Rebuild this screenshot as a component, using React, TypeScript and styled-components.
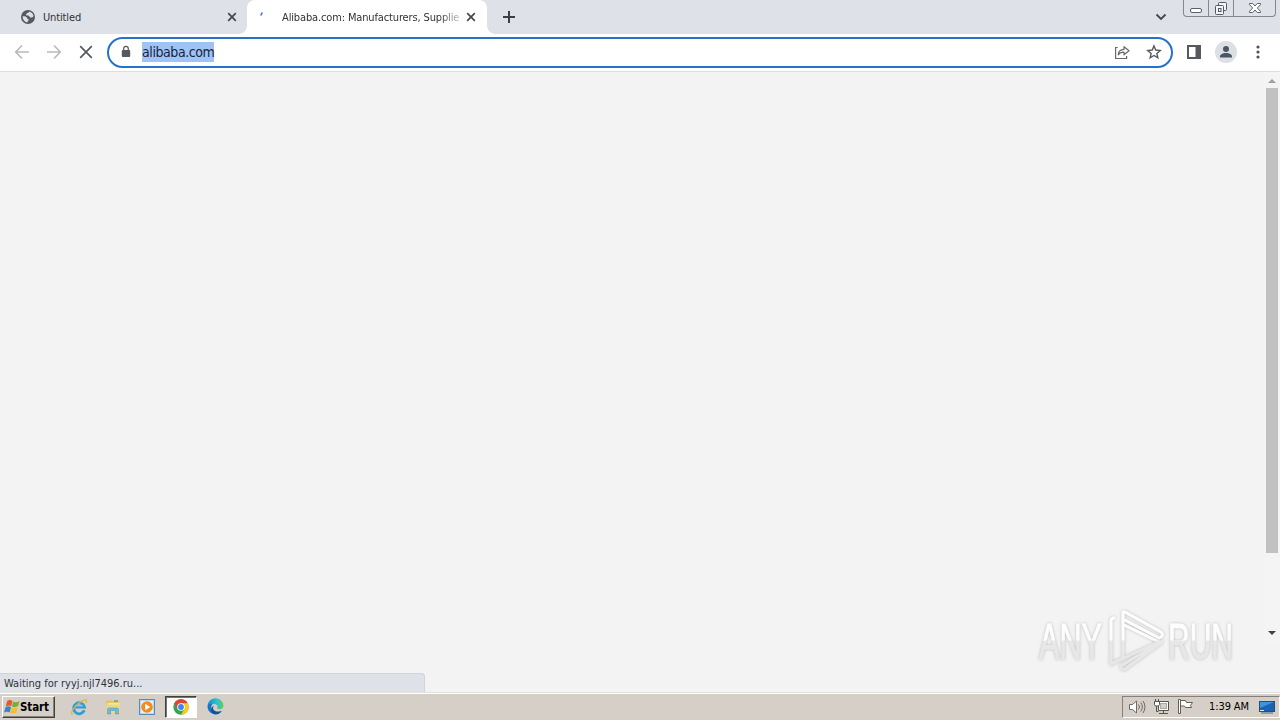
import React from "react";
import styled, { createGlobalStyle } from "styled-components";

const GlobalStyle = createGlobalStyle`
  * {
    box-sizing: border-box;
  }
  body {
    margin: 0;
    overflow: hidden;
    font-family: "DejaVu Sans Condensed", "DejaVu Sans", Tahoma, sans-serif;
    font-stretch: condensed;
  }
  svg {
    display: block;
    flex: none;
  }
`;

const Screen = styled.div`
  position: relative;
  display: flex;
  flex-direction: column;
  width: 1280px;
  height: 720px;
  background: #f3f3f3;
  color: #303236;
`;

const TabStrip = styled.div`
  display: flex;
  height: 34px;
  flex: none;
  background: #dee1e8;
`;

const Tab = styled.div<{ $active?: boolean }>`
  position: relative;
  display: flex;
  align-items: center;
  width: ${({ $active }) => ($active ? "240px" : "247px")};
  padding: ${({ $active }) => ($active ? "0 9px 0 13px" : "0 8px 0 20px")};
  background: ${({ $active }) => ($active ? "#fff" : "transparent")};
  border-radius: 8px 8px 0 0;
  &::before,
  &::after {
    content: "";
    display: ${({ $active }) => ($active ? "block" : "none")};
    position: absolute;
    bottom: 0;
    width: 8px;
    height: 8px;
  }
  &::before {
    left: -8px;
    background: radial-gradient(circle at 0 0, transparent 7.5px, #fff 8px);
  }
  &::after {
    right: -8px;
    background: radial-gradient(circle at 100% 0, transparent 7.5px, #fff 8px);
  }
`;

const TabTitle = styled.span<{ $gap: number; $fade?: boolean }>`
  flex: 1;
  min-width: 0;
  margin: 0 4px 0 ${({ $gap }) => $gap}px;
  padding-top: 1px;
  white-space: nowrap;
  font-size: 11px;
  line-height: 16px;
  letter-spacing: -0.14px;
  mask-image: ${({ $fade }) =>
    $fade ? "linear-gradient(90deg, #000 88%, rgba(0, 0, 0, 0.25))" : "none"};
`;

const NewTab = styled.div`
  display: flex;
  align-items: center;
  margin-left: 15px;
`;

const StripEnd = styled.div`
  display: flex;
  margin-left: auto;
  padding-right: 4px;
`;

const TabSearch = styled.div`
  display: flex;
  align-items: center;
  margin-right: 16px;
`;

const WindowControls = styled.div`
  display: flex;
  height: 17px;
  border: 1px solid #84878e;
  border-top: none;
  border-radius: 0 0 4px 4px;
`;

const WindowButton = styled.div<{ $width: number }>`
  display: flex;
  justify-content: center;
  width: ${({ $width }) => $width}px;
  & + & {
    border-left: 1px solid #84878e;
  }
`;

const Toolbar = styled.div`
  display: flex;
  align-items: center;
  height: 38px;
  flex: none;
  padding: 0 14px 1px 12px;
  background: #fff;
  border-bottom: 1px solid #dcdddf;
`;

const NavButtons = styled.div`
  display: flex;
  gap: 12px;
  margin-right: 11px;
`;

const AddressBar = styled.div`
  display: flex;
  align-items: center;
  flex: 1;
  height: 31px;
  padding: 0 9px 0 10px;
  border: 2px solid #2672c9;
  border-radius: 16px;
  background: #fff;
`;

const Address = styled.span`
  margin: 0 auto 0 9px;
  padding-top: 1px;
  background: #a0c3f6;
  color: #17233c;
  font-size: 14px;
  line-height: 19px;
  letter-spacing: -0.42px;
`;

const AddressActions = styled.div`
  display: flex;
  align-items: center;
  gap: 16px;
`;

const ToolbarActions = styled.div`
  display: flex;
  align-items: center;
  gap: 13px;
  margin-left: 13px;
`;

const Avatar = styled.div`
  display: flex;
  align-items: center;
  justify-content: center;
  width: 22px;
  height: 22px;
  border-radius: 50%;
  background: #dcdfe4;
`;

const Page = styled.div`
  display: flex;
  flex: 1;
  min-height: 0;
`;

const PageBody = styled.div`
  display: flex;
  align-items: flex-end;
  flex: 1;
`;

const StatusBubble = styled.div`
  width: 425px;
  height: 19px;
  padding-left: 4px;
  background: #dee1e8;
  border: 1px solid #d2d4d9;
  border-left: none;
  border-bottom: none;
  border-radius: 0 4px 0 0;
  font-size: 11px;
  line-height: 19px;
  white-space: nowrap;
`;

const Scrollbar = styled.div`
  display: flex;
  flex-direction: column;
  align-items: center;
  width: 16px;
  height: 570px;
  background: #f4f4f4;
`;

const Thumb = styled.div`
  width: 12px;
  height: 465px;
  background: #c1c1c1;
`;

const Arrow = styled.div<{ $down?: boolean }>`
  width: 8px;
  height: 4px;
  margin: ${({ $down }) => ($down ? "auto 0 7px 0" : "7px 0 5px 0")};
  background: ${({ $down }) => ($down ? "#404040" : "#a0a0a0")};
  clip-path: ${({ $down }) =>
    $down ? "polygon(0 0, 100% 0, 50% 100%)" : "polygon(50% 0, 100% 100%, 0 100%)"};
`;

const Watermark = styled.div`
  position: absolute;
  left: 1030px;
  top: 600px;
`;

const Taskbar = styled.div`
  display: flex;
  align-items: center;
  height: 28px;
  flex: none;
  padding: 0 0 0 2px;
  background: #d5cfc7;
  border-top: 1px solid #e4e2df;
  box-shadow: inset 0 1px 0 #fff;
`;

const StartButton = styled.div`
  display: flex;
  align-items: center;
  width: 53px;
  height: 22px;
  padding-left: 1px;
  border: 1px solid;
  border-color: #fff #404040 #404040 #fff;
  box-shadow: inset -1px -1px 0 #858078;
  color: #000;
  font-size: 11.5px;
  font-weight: 700;
  letter-spacing: -0.1px;
`;

const QuickLaunch = styled.div`
  display: flex;
  align-items: center;
  margin-left: 7px;
`;

const TaskItem = styled.div<{ $active?: boolean }>`
  display: flex;
  align-items: center;
  justify-content: center;
  width: ${({ $active }) => ($active ? "32px" : "34px")};
  height: 22px;
  margin: ${({ $active }) => ($active ? "0 1px" : "0")};
  background: ${({ $active }) => ($active ? "#fff" : "transparent")};
  border: ${({ $active }) => ($active ? "1px solid" : "none")};
  border-color: #404040 #fff #fff #404040;
  box-shadow: ${({ $active }) => ($active ? "inset 1px 1px 0 #77736e" : "none")};
`;

const Tray = styled.div`
  display: flex;
  align-items: center;
  width: 158px;
  height: 22px;
  margin-left: auto;
  padding-left: 5px;
  border: 1px solid;
  border-color: #85817a #fff #fff #85817a;
  gap: 7px;
`;

const Clock = styled.span`
  width: 42px;
  margin: 0 1px 0 8px;
  color: #000;
  font-size: 11px;
  letter-spacing: -0.1px;
  white-space: nowrap;
`;

const GlobeIcon = () => (
  <svg width="16" height="16" viewBox="0 0 16 16">
    <circle cx="8" cy="8" r="7" fill="#56595e" />
    <path
      d="M2.7 7.2c2 0 4.2.3 4.4 1.8.2 1.2 1.5.8 1.6 1.8.1 1-1.3 1.1-1.4 2.8A5.7 5.7 0 0 1 2.7 7.2ZM9.2 2.4c-.2 1-.3 1.3-1.6 1.4-1 .1-.5 1.2-1.6 1.5-.3.9.8 1.1 1.9 1.1 1.7 0 1.3 1.6 2.4 2 1.2.4 2.2.1 3.2-1.1A5.7 5.7 0 0 0 9.2 2.4Z"
      fill="#dee1e8"
    />
  </svg>
);

const CloseIcon = () => (
  <svg width="14" height="14" viewBox="0 0 14 14" stroke="#45484c" strokeWidth="1.7">
    <path d="M3.200 3.200l7.600 7.600M10.800 3.200l-7.600 7.600" />
  </svg>
);

const BackIcon = () => (
  <svg width="20" height="20" viewBox="0 0 20 20" fill="none" stroke="#b9babc" strokeWidth="1.6">
    <path d="M17 10H4M10 3.5L3.7 10l6.3 6.5" />
  </svg>
);

const ForwardIcon = () => (
  <svg width="20" height="20" viewBox="0 0 20 20" fill="none" stroke="#b9babc" strokeWidth="1.6">
    <path d="M3 10h13M10 3.5l6.3 6.5-6.3 6.5" />
  </svg>
);

const StopIcon = () => (
  <svg width="20" height="20" viewBox="0 0 20 20" stroke="#56595d" strokeWidth="1.7">
    <path d="M4.2 4.2l11.6 11.6M15.8 4.2L4.2 15.8" />
  </svg>
);

const LockIcon = () => (
  <svg width="14" height="14" viewBox="0 0 14 14">
    <rect x="2.8" y="5" width="8.400" height="7" rx="1" fill="#55585c" />
    <path d="M4.7 5.5V3.7a2.3 2.3 0 0 1 4.6 0v1.8" fill="none" stroke="#55585c" strokeWidth="1.2" />
  </svg>
);

const ShareIcon = () => (
  <svg width="16" height="16" viewBox="0 0 16 16" fill="none" stroke="#66696d" strokeWidth="1.2">
    <path d="M3.700 3.500H1.600v11h11V12" />
    <path
      d="M4.200 10.800c.2-3.500 2-5.200 5.800-5.400V2.700l5 4.100-5 4V8.200c-2.700 0-4.300.5-5.800 2.600Z"
      strokeLinejoin="round"
    />
  </svg>
);

const StarIcon = () => (
  <svg width="16" height="16" viewBox="0 0 16 16" fill="none" stroke="#56595d" strokeWidth="1.4">
    <path d="M8 1.900l1.750 4.150 4.500.4-3.400 2.950 1 4.400L8 11.450 4.150 13.800l1-4.400L1.750 6.450l4.500-.4Z" />
  </svg>
);

const SidePanelIcon = () => (
  <svg width="16" height="16" viewBox="0 0 16 16">
    <rect x="2" y="2" width="12" height="12" fill="none" stroke="#55585d" strokeWidth="2" />
    <path d="M9.500 2H14v12H9.500Z" fill="#55585d" />
  </svg>
);

const WindowsFlag = () => (
  <svg width="16" height="16" viewBox="0 0 16 16">
    <path d="M3.200 2C5 .6 6.800 1 8.500 2L7.200 7.200C5.500 6.200 4 6.200 1.700 7.400Z" fill="#e4582b" />
    <path d="M9.200 2.500c2 1 3.900.9 6.300-.6L14.100 7.100c-2.200 1.400-4.200 1.400-6.200.4Z" fill="#77ad38" />
    <path d="M1.500 8.200c2-1.200 3.900-1.100 5.500-.1l-1.300 5.400C4 12.500 2.400 12.500.1 13.600Z" fill="#3a82ca" />
    <path d="M7.700 8.500c2 1 3.900.9 6.200-.5l-1.400 5.500c-2 1.300-4.200 1.200-6.200.2Z" fill="#f4bf2f" />
  </svg>
);

const ExplorerE = () => (
  <svg width="18" height="18" viewBox="0 0 18 18" fill="none">
    <path d="M14.300 12.200A5.500 5.500 0 1 1 14.500 9H5" stroke="#2f9edb" strokeWidth="2.800" />
    <path d="M5 7.800h8" stroke="#8ed3f2" />
    <path
      d="M3 15.600C.300 17.300 1.200 12.800 5.600 8.100 10.200 3.200 16.500.200 16.600 2.700c0 .8-.3 1.500-.8 2.300"
      stroke="#e5b43b"
      strokeWidth="1.200"
    />
  </svg>
);

const FolderIcon = () => (
  <svg width="18" height="18" viewBox="0 0 18 18">
    <path d="M2 3.500l1-1h5l1 1h6v10H2Z" fill="#e5c465" />
    <path d="M3.500 5h12v9h-12Z" fill="#f4e7a3" />
    <path d="M2 6.500h14V15H2Z" fill="#ecd77f" />
    <path
      d="M3.500 16v-4.500q0-1.500 1.500-1.500h8q1.500 0 1.500 1.500V16h-3v-3.500h-5V16Z"
      fill="#70b9dc"
      stroke="#4295bf"
      strokeWidth=".5"
    />
    <path d="M10 3h4" stroke="#64aa65" strokeWidth="1.500" />
  </svg>
);

const MediaIcon = () => (
  <svg width="16" height="16" viewBox="0 0 16 16">
    <rect x=".5" y=".5" width="15" height="15" fill="#b9d9f2" stroke="#568bba" />
    <rect x="2" y="2" width="12" height="12" fill="#e9eff3" />
    <circle cx="8" cy="8" r="5.800" fill="#f18c20" />
    <path d="M6.200 4.800v6.400L11.200 8Z" fill="#fff" />
  </svg>
);

const ChromeIcon = () => (
  <svg width="16" height="16" viewBox="0 0 16 16">
    <circle cx="8" cy="8" r="7.700" fill="#36a354" />
    <path d="M1.300 4.200A7.700 7.700 0 0 1 14.700 4.200H8L4.700 9.900Z" fill="#df4534" />
    <path d="M14.700 4.200A7.700 7.700 0 0 1 8 15.700L11.300 9.900 8 4.200Z" fill="#fbca20" />
    <circle cx="8" cy="8" r="3.800" fill="#fff" />
    <circle cx="8" cy="8" r="2.900" fill="#4184ed" />
  </svg>
);

const EdgeIcon = () => (
  <svg width="17" height="17" viewBox="0 0 17 17">
    <defs>
      <linearGradient id="edgeTop" x1="0" x2="1">
        <stop stopColor="#148fd2" />
        <stop offset=".55" stopColor="#29bfd0" />
        <stop offset="1" stopColor="#63cf5b" />
      </linearGradient>
    </defs>
    <path
      d="M.500 8.500a8 8 0 0 1 16-.7c.2 3-3 4-5.500 3.100-1-.4-1.100-1-.5-1.700C11 7 8.500 5.700 6 5.800 2.500 6 .8 7.300.5 8.500Z"
      fill="url(#edgeTop)"
    />
    <path
      d="M.500 8.500C1 5.900 3.700 5.100 6 5.800c-2 1.400-2.300 3.500-1.200 5.700 1.200 2.300 4.200 3.800 7.500 2.800l2.400-1A8 8 0 0 1 .5 8.500Z"
      fill="#1774c5"
    />
    <path
      d="M6.800 7.500c-2 3.200.2 6.300 4.700 6.100 1.300 0 2.300-.5 3.200-.9-1.700 3-4.800 4-7.500 3.500C3 14.500 3 9.500 6.800 7.500Z"
      fill="#135596"
    />
  </svg>
);

const SpeakerIcon = () => (
  <svg width="18" height="16" viewBox="0 0 18 16" fill="none" stroke="#6c6a67">
    <path d="M1.500 5.500h3L8.500 2v12L4.500 10.500h-3Z" fill="#fff" />
    <path d="M10.500 5.500q2 2.500 0 5M12.700 3.500q3.300 4.500 0 9M15 2q4 6 0 12" />
  </svg>
);

const NetworkIcon = () => (
  <svg width="17" height="17" viewBox="0 0 17 17" fill="#fff" stroke="#55534f">
    <path d="M5.500 3.500h10v9h-10ZM6 15.500h9M10.500 12.500v3" />
    <rect x="7.500" y="5.500" width="6" height="5" fill="#d3d0ca" stroke="#aaa6a0" />
    <path d="M1.500 3.500h5v3l-1 1.500h-3l-1-1.500ZM2.500 1v2.500M5.500 1v2.500" />
    <path d="M3.500 8v5.500h2" fill="none" />
  </svg>
);

const FlagIcon = () => (
  <svg width="17" height="17" viewBox="0 0 17 17" fill="#fff" stroke="#62605c">
    <path d="M3.500 2.500h5l1 2h6l-2 3 1 2h-6l-1-1.500h-4Z" />
    <path d="M1.500 1.500h2v14h-2Z" />
  </svg>
);

const DesktopIcon = () => (
  <svg width="16" height="16" viewBox="0 0 16 16">
    <rect x=".5" y="2.500" width="15" height="10" fill="#1b62b5" stroke="#294d75" />
    <path d="M1 3h14L1 9Z" fill="#3c95df" />
    <path d="M2 14h12" stroke="#788b9b" strokeWidth="1.500" />
    <path d="M1 11.500h4" stroke="#dcecf6" />
  </svg>
);

const WatermarkLogo = () => (
  <svg width="240" height="90" viewBox="0 0 240 90">
    <defs>
      <linearGradient id="wm" gradientUnits="userSpaceOnUse" x1="0" y1="10" x2="0" y2="70">
        <stop offset="0" stopColor="#fff" />
        <stop offset=".5" stopColor="#fcfcfc" />
        <stop offset=".52" stopColor="#e8e8e8" />
        <stop offset="1" stopColor="#e6e6e6" />
      </linearGradient>
      <filter id="wmShadow" x="-10%" y="-20%" width="120%" height="140%">
        <feDropShadow dx="0" dy="0" stdDeviation="1.800" floodColor="#888" floodOpacity=".55" />
      </filter>
    </defs>
    <g filter="url(#wmShadow)">
      <g
        fill="url(#wm)"
        stroke="url(#wm)"
        strokeWidth=".8"
        fontFamily="'Liberation Sans Narrow', 'Liberation Sans', sans-serif"
        fontSize="50"
      >
        <text x="9" y="59" textLength="63" lengthAdjust="spacingAndGlyphs">
          ANY
        </text>
        <text x="138" y="59" textLength="65" lengthAdjust="spacingAndGlyphs">
          RUN
        </text>
      </g>
      <g
        fill="none"
        stroke="url(#wm)"
        strokeWidth="3"
        strokeLinejoin="round"
        strokeLinecap="round"
      >
        <path d="M84 18q-3 0-3 3v43l12-6V13q0-2 2-1l36 20q3 3 0 5l-2 1-34-18" />
        <path d="M94 25l35 17-48 22" />
        <path d="M132 42L95 69q-4 1-4-3l39-24" />
      </g>
    </g>
  </svg>
);

export default function App() {
  return (
    <>
      <GlobalStyle />
      <Screen>
        <TabStrip>
          <Tab>
            <GlobeIcon />
            <TabTitle $gap={7}>Untitled</TabTitle>
            <CloseIcon />
          </Tab>
          <Tab $active>
            <svg width="16" height="16" viewBox="0 0 16 16">
              <path d="M.8 6.500l1.500-3" stroke="#3d70dc" strokeWidth="1.600" />
            </svg>
            <TabTitle $gap={6} $fade>
              Alibaba.com: Manufacturers, Supplie
            </TabTitle>
            <CloseIcon />
          </Tab>
          <NewTab>
            <svg width="14" height="14" viewBox="0 0 14 14" stroke="#3b3e43" strokeWidth="2">
              <path d="M7 1v12M1 7h12" />
            </svg>
          </NewTab>
          <StripEnd>
            <TabSearch>
              <svg width="12" height="12" viewBox="0 0 12 12" fill="none" stroke="#44474c" strokeWidth="1.8">
                <path d="M1.500 3.500L6 8l4.500-4.500" />
              </svg>
            </TabSearch>
            <WindowControls>
              <WindowButton $width={24}>
                <svg width="16" height="16" viewBox="0 0 16 16">
                  <rect x="2.500" y="8.500" width="11" height="4" rx="1.500" fill="#fff" stroke="#5c6067" />
                </svg>
              </WindowButton>
              <WindowButton $width={25}>
                <svg width="16" height="16" viewBox="0 0 16 16" fill="#f3f4f6" stroke="#54585f">
                  <rect x="5.500" y="2.500" width="8" height="8" rx="1" />
                  <rect x="2.500" y="5.500" width="8" height="9" rx="1" />
                  <rect x="5.500" y="8.500" width="2.500" height="3" />
                </svg>
              </WindowButton>
              <WindowButton $width={42}>
                <svg width="16" height="16" viewBox="0 0 16 16">
                  <path
                    d="M2.500 3.500h3.200L8 6l2.300-2.500h3.200v1.200L10.300 8l3.200 3.300v1.200h-3.200L8 10l-2.300 2.500H2.500v-1.200L5.700 8 2.500 4.700Z"
                    fill="#fff"
                    stroke="#5c6067"
                  />
                </svg>
              </WindowButton>
            </WindowControls>
          </StripEnd>
        </TabStrip>

        <Toolbar>
          <NavButtons>
            <BackIcon />
            <ForwardIcon />
            <StopIcon />
          </NavButtons>
          <AddressBar>
            <LockIcon />
            <Address>alibaba.com</Address>
            <AddressActions>
              <ShareIcon />
              <StarIcon />
            </AddressActions>
          </AddressBar>
          <ToolbarActions>
            <SidePanelIcon />
            <Avatar>
              <svg width="16" height="16" viewBox="0 0 16 16" fill="#4b5567">
                <circle cx="8" cy="5" r="3" />
                <path d="M2 13.500v-1c0-2 3-3.500 6-3.500s6 1.500 6 3.500v1Z" />
              </svg>
            </Avatar>
            <svg width="16" height="16" viewBox="0 0 16 16" fill="#505358">
              <circle cx="8" cy="3" r="1.600" />
              <circle cx="8" cy="8" r="1.600" />
              <circle cx="8" cy="13" r="1.600" />
            </svg>
          </ToolbarActions>
        </Toolbar>

        <Page>
          <PageBody>
            <StatusBubble>Waiting for ryyj.njl7496.ru...</StatusBubble>
          </PageBody>
          <Scrollbar>
            <Arrow />
            <Thumb />
            <Arrow $down />
          </Scrollbar>
        </Page>

        <Taskbar>
          <StartButton>
            <WindowsFlag />
            Start
          </StartButton>
          <QuickLaunch>
            <TaskItem>
              <ExplorerE />
            </TaskItem>
            <TaskItem>
              <FolderIcon />
            </TaskItem>
            <TaskItem>
              <MediaIcon />
            </TaskItem>
            <TaskItem $active>
              <ChromeIcon />
            </TaskItem>
            <TaskItem>
              <EdgeIcon />
            </TaskItem>
          </QuickLaunch>
          <Tray>
            <SpeakerIcon />
            <NetworkIcon />
            <FlagIcon />
            <Clock>1:39 AM</Clock>
            <DesktopIcon />
          </Tray>
        </Taskbar>

        <Watermark>
          <WatermarkLogo />
        </Watermark>
      </Screen>
    </>
  );
}
